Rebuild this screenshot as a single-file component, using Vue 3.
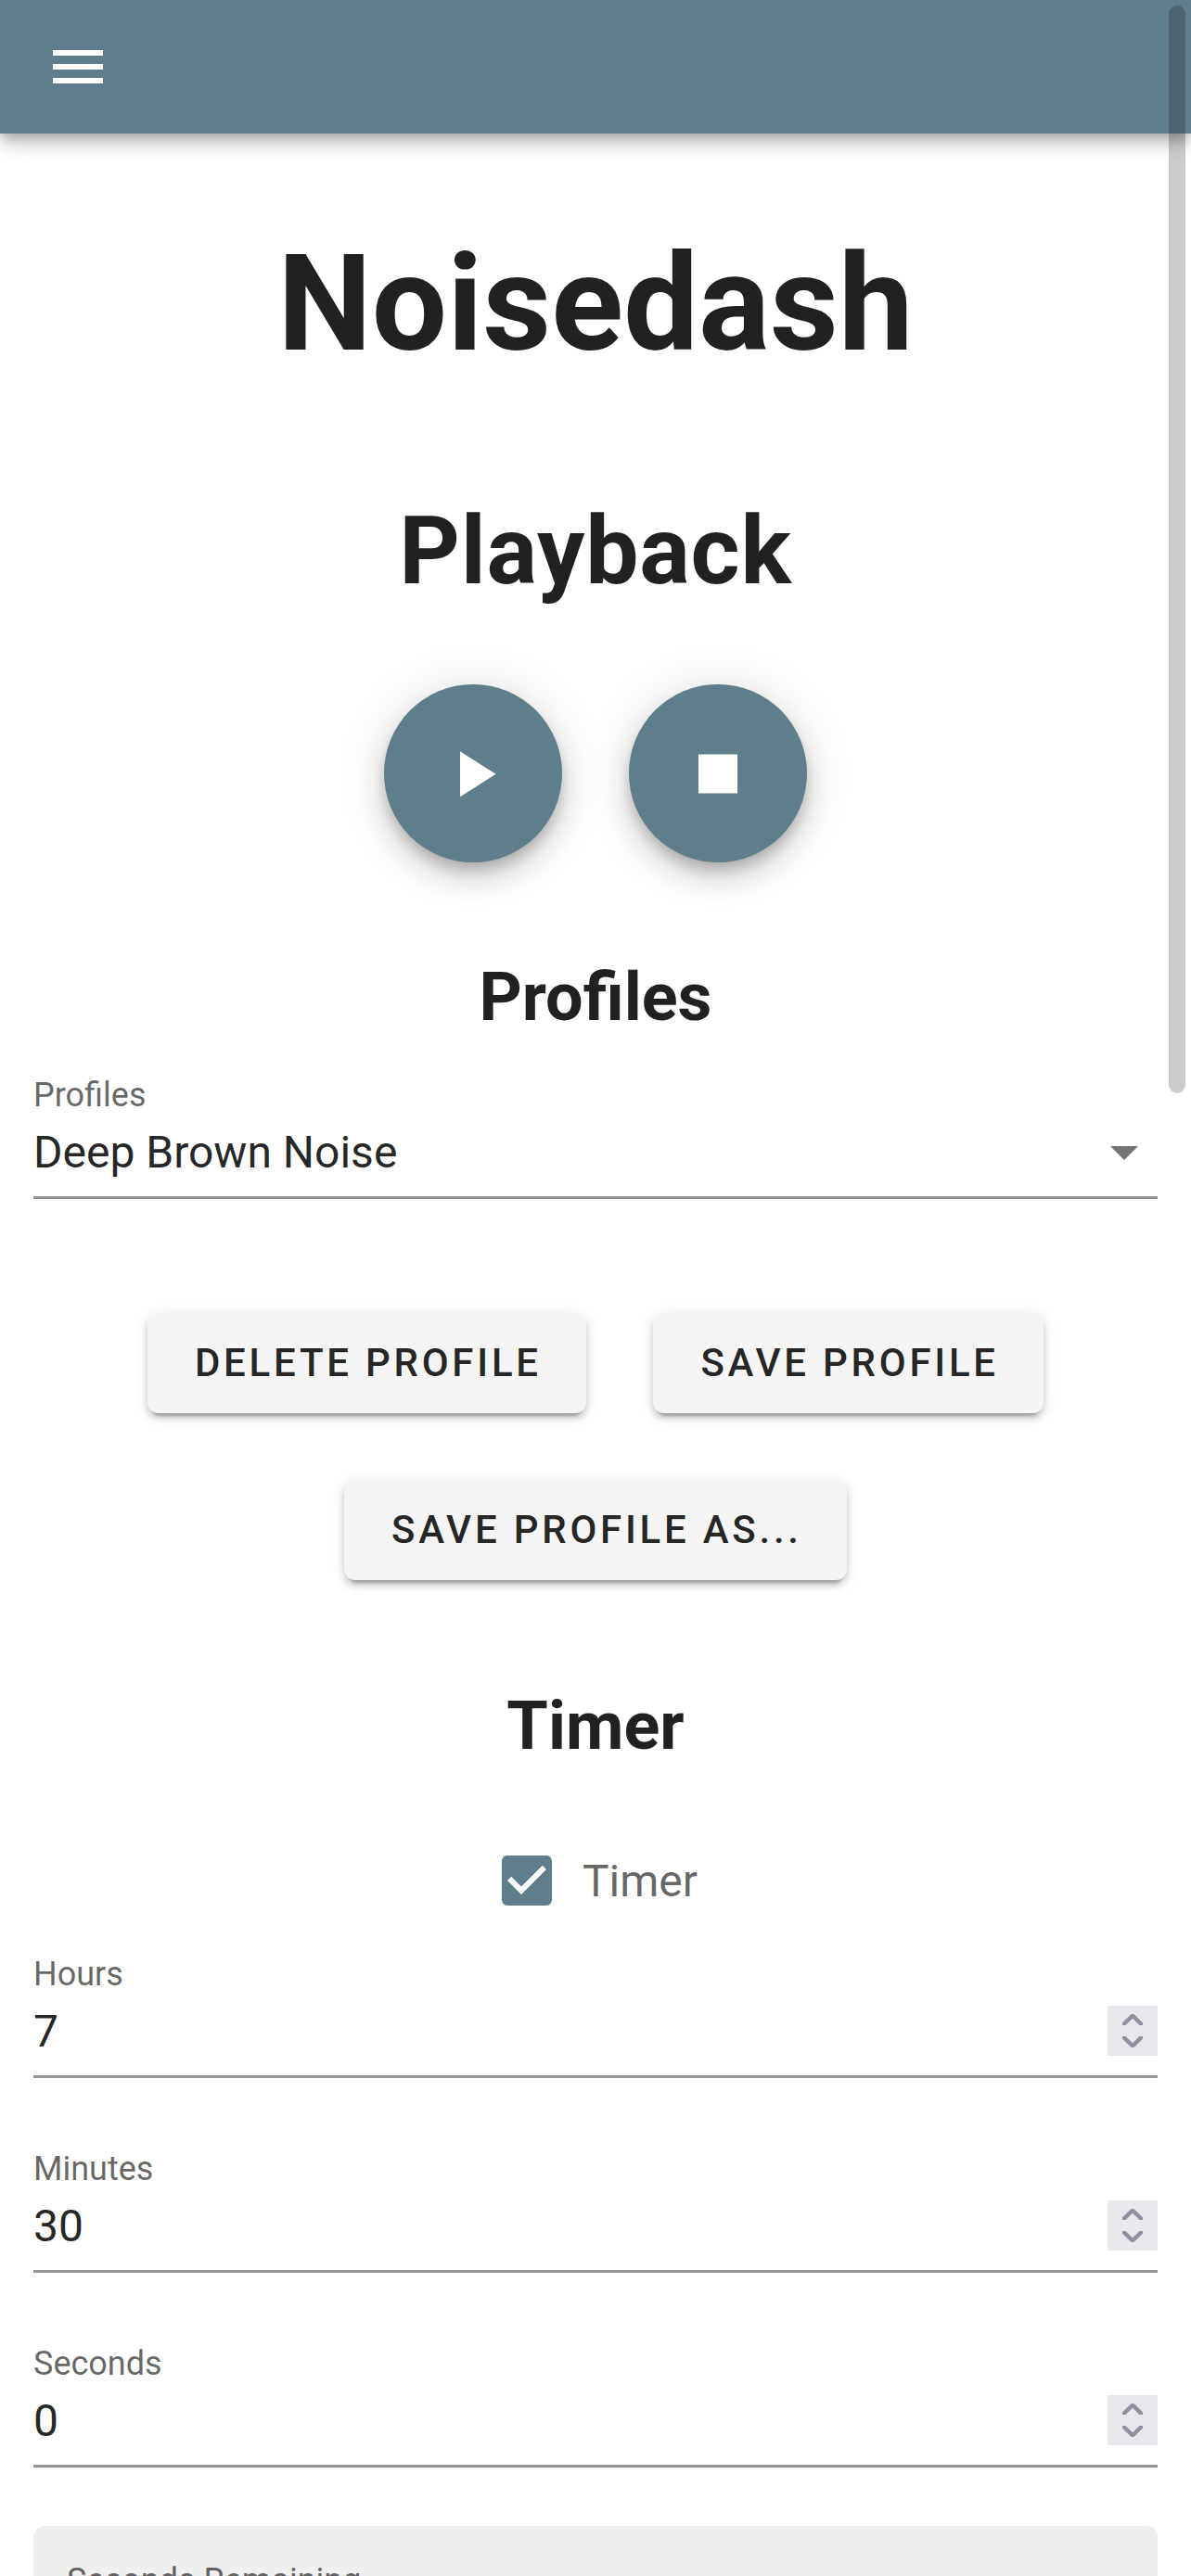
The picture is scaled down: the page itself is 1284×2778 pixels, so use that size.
<script setup>
import { ref } from 'vue'

const profile = ref('Deep Brown Noise')
const timerFields = ref([
  { label: 'Hours', value: 7 },
  { label: 'Minutes', value: 30 },
  { label: 'Seconds', value: 0 },
])
</script>

<template>
  <div class="app">
    <header class="app-bar">
      <svg class="icon" viewBox="0 0 24 24" fill="#fff">
        <path d="M3,6H21V8H3V6M3,11H21V13H3V11M3,16H21V18H3V16Z" />
      </svg>
    </header>

    <main class="content">
      <h1 class="title">Noisedash</h1>

      <h2 class="playback">Playback</h2>
      <div class="fabs">
        <button class="fab" aria-label="Play">
          <svg viewBox="0 -0.1 24 24" fill="#fff"><path d="M8,5.14V19.14L19,12.14L8,5.14Z" /></svg>
        </button>
        <button class="fab" aria-label="Stop">
          <svg viewBox="0 -0.17 24 24" fill="#fff"><path d="M18,18H6V6H18V18Z" /></svg>
        </button>
      </div>

      <h3 class="section">Profiles</h3>
      <div class="field select">
        <div class="label">Profiles</div>
        <div class="row">
          <span class="value">{{ profile }}</span>
          <svg class="icon caret" viewBox="0 0 24 24"><path d="M7,10L12,15L17,10H7Z" /></svg>
        </div>
      </div>

      <div class="buttons">
        <button class="btn">Delete Profile</button>
        <button class="btn">Save Profile</button>
        <button class="btn">Save Profile As...</button>
      </div>

      <h3 class="section timer">Timer</h3>
      <div class="checkbox">
        <svg class="icon" viewBox="0 0 24 24" fill="#607d8b">
          <path d="M10,17L5,12L6.41,10.58L10,14.17L17.59,6.58L19,8M19,3H5C3.89,3 3,3.89 3,5V19A2,2 0 0,0 5,21H19A2,2 0 0,0 21,19V5C21,3.89 20.1,3 19,3Z" />
        </svg>
        <span class="check-label">Timer</span>
      </div>

      <div class="timer-fields">
        <div v-for="f in timerFields" :key="f.label" class="field">
          <div class="label">{{ f.label }}</div>
          <div class="row">
            <span class="value">{{ f.value }}</span>
            <svg class="spinner" viewBox="0 0 54 54">
              <rect width="54" height="54" fill="#e8e7ec" />
              <g fill="#9290a0">
                <path d="M16,21V18.3L25.6,9H28.4L38,18.3V21H34.5L27,13.7L19.5,21Z" />
                <path d="M16,33V35.7L25.6,45H28.4L38,35.7V33H34.5L27,40.3L19.5,33Z" />
              </g>
            </svg>
          </div>
        </div>
      </div>

      <div class="filled">
        <div class="label">Seconds Remaining</div>
      </div>
    </main>

    <div class="scroll-thumb"></div>
  </div>
</template>

<style>
body {
  margin: 0;
  background: #fff;
}
</style>

<style scoped>
.app {
  position: relative;
  width: 1284px;
  height: 2778px;
  overflow: hidden;
  background: #fff;
  color: rgba(0, 0, 0, 0.87);
  font-family: Roboto, sans-serif;
}
.app-bar {
  box-sizing: border-box;
  height: 144px;
  padding: 36px 48px;
  background: #607d8b;
  box-shadow: 0 6px 12px -3px rgba(0, 0, 0, 0.2), 0 12px 15px 0 rgba(0, 0, 0, 0.14),
    0 3px 30px 0 rgba(0, 0, 0, 0.12);
}
.icon {
  display: block;
  width: 72px;
  height: 72px;
  flex: none;
}
.content {
  display: flex;
  flex-direction: column;
  padding: 0 36px;
}
h1,
h2,
h3 {
  margin: 0;
  font-weight: 700;
  text-align: center;
}
.title {
  margin-top: 109px;
  font-size: 144px;
  line-height: 150px;
}
.playback {
  margin-top: 131px;
  font-size: 102px;
  line-height: 120px;
  letter-spacing: 0.0073529412em;
}
.fabs {
  display: flex;
  justify-content: center;
  gap: 72px;
  margin-top: 84px;
}
.fab {
  display: flex;
  align-items: center;
  justify-content: center;
  width: 192px;
  height: 192px;
  padding: 0;
  border: 0;
  border-radius: 50%;
  background: #607d8b;
  box-shadow: 0 9px 15px -3px rgba(0, 0, 0, 0.2), 0 18px 30px 0 rgba(0, 0, 0, 0.14),
    0 3px 54px 0 rgba(0, 0, 0, 0.12);
}
.fab svg {
  width: 84px;
  height: 84px;
}
.section {
  margin-top: 98px;
  font-size: 72px;
  line-height: 96px;
}
.section.timer {
  margin-top: 110px;
}
.field {
  height: 139px;
  border-bottom: 3px solid #949494;
}
.field.select {
  margin-top: 27px;
}
.label {
  font-size: 36px;
  line-height: 60px;
  color: rgba(0, 0, 0, 0.6);
}
.row {
  display: flex;
  align-items: center;
  justify-content: space-between;
  height: 64px;
}
.value {
  font-size: 48px;
  line-height: 64px;
}
.caret {
  margin-top: -2px;
  fill: #757575;
}
.spinner {
  width: 54px;
  height: 54px;
  margin-top: -2px;
}
.buttons {
  display: flex;
  flex-wrap: wrap;
  justify-content: center;
  gap: 72px;
  margin-top: 123px;
}
.btn {
  height: 108px;
  padding: 0 48.4px 0 51.2px;
  border: 0;
  border-radius: 12px;
  background: #f5f5f5;
  color: rgba(0, 0, 0, 0.87);
  font: 500 42px/108px Roboto, sans-serif;
  letter-spacing: 0.0892857143em;
  text-transform: uppercase;
  box-shadow: 0 9px 3px -6px rgba(0, 0, 0, 0.2), 0 6px 6px 0 rgba(0, 0, 0, 0.14),
    0 3px 15px 0 rgba(0, 0, 0, 0.12);
}
.checkbox {
  display: flex;
  align-items: center;
  justify-content: center;
  gap: 24px;
  height: 72px;
  margin-top: 82px;
  font-size: 48px;
  line-height: 72px;
  color: rgba(0, 0, 0, 0.6);
}
.check-label {
  padding-top: 2px;
}
.timer-fields {
  display: flex;
  flex-direction: column;
  gap: 68px;
  margin-top: 35px;
}
.filled {
  height: 168px;
  margin-top: 63px;
  padding: 29px 36px 0;
  box-sizing: border-box;
  border-radius: 12px 12px 0 0;
  background: #efefef;
}
.scroll-thumb {
  position: absolute;
  top: 6px;
  right: 6px;
  width: 18px;
  height: 1173px;
  border-radius: 9px;
  background: rgba(0, 0, 0, 0.2);
}
</style>
